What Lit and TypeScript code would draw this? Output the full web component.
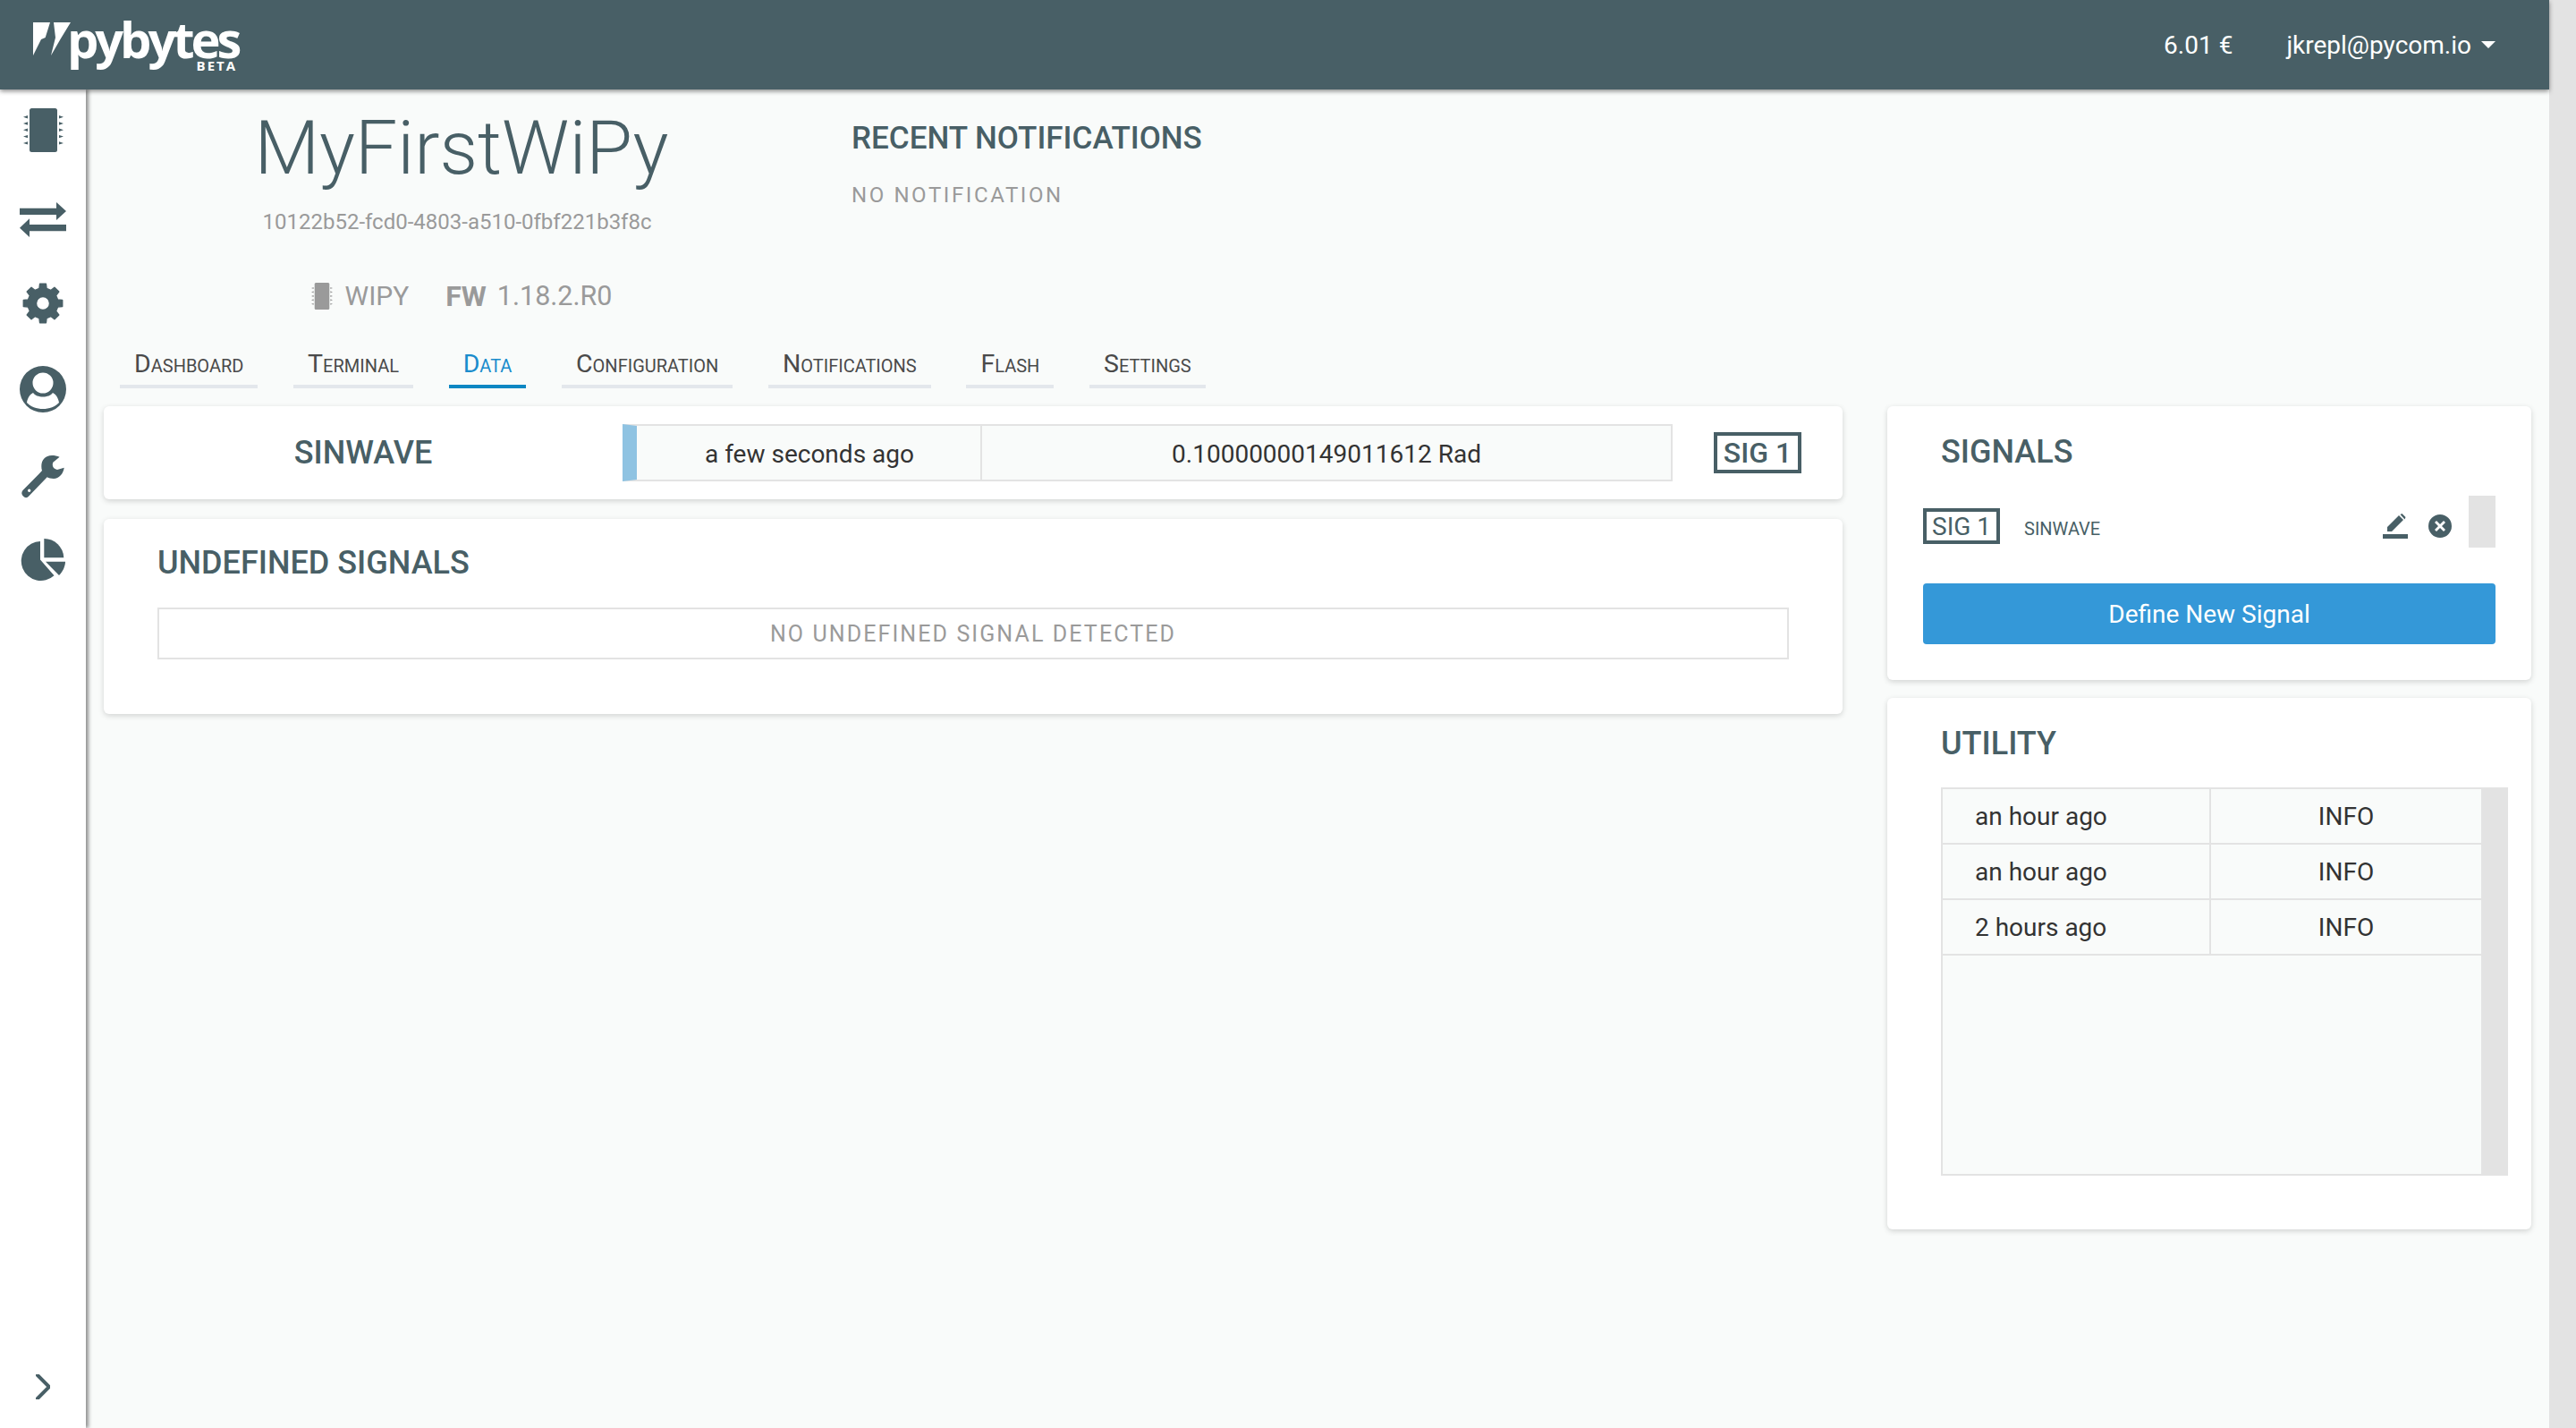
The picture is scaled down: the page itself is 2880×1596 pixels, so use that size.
import { LitElement, html, css, svg } from 'lit';
import { customElement } from 'lit/decorators.js';

const chipPins = [0, 1, 2, 3, 4];

const chipIcon = svg`
  <rect x="7" y="0" width="31" height="49" rx="2.500"></rect>
  ${chipPins.map(
    (i) => svg`
      <path d="M0 ${9.7 + i * 7.3}l5-1.700v3.400zM45 ${9.7 + i * 7.3}l-5-1.700v3.400z"></path>
    `
  )}
`;

// 8 teeth, built from angles so every tooth comes out the same
function gearPath(cx: number, cy: number, outer: number, root: number, hole: number) {
  const pt = (deg: number, r: number) => {
    const a = (deg * Math.PI) / 180;
    return `${(cx + r * Math.cos(a)).toFixed(2)} ${(cy + r * Math.sin(a)).toFixed(2)}`;
  };
  const parts: string[] = [];
  for (let i = 0; i < 8; i++) {
    const c = i * 45;
    parts.push(`${i === 0 ? 'M' : 'L'}${pt(c - 14, root)}`, `L${pt(c - 9, outer)}`, `L${pt(c + 9, outer)}`, `L${pt(c + 14, root)}`);
  }
  return `${parts.join(' ')}z M${cx - hole} ${cy}a${hole} ${hole} 0 1 0 ${hole * 2} 0a${hole} ${hole} 0 1 0 ${-hole * 2} 0z`;
}

@customElement('app-root')
export class AppRoot extends LitElement {
  static styles = css`
    :host {
      display: flex;
      width: 2880px;
      height: 1596px;
      overflow: hidden;
      font-family: Roboto, 'Liberation Sans', sans-serif;
      background: #e3e3e3;
    }
    .page {
      flex: 1;
      min-width: 0;
      display: flex;
      flex-direction: column;
      background: #f9fbfa;
    }
    .track {
      width: 30px;
      background: #e3e3e3;
    }
    header {
      position: relative;
      z-index: 2;
      height: 100px;
      flex: none;
      display: flex;
      align-items: center;
      justify-content: space-between;
      background: #485f66;
      color: #fff;
      box-shadow: 0 2px 5px rgba(0, 0, 0, 0.45);
    }
    .logo {
      align-self: flex-start;
      display: flex;
      align-items: flex-start;
      margin-left: 36px;
    }
    .logo svg {
      width: 45px;
      height: 39px;
      margin-top: 24px;
      fill: #fff;
    }
    .logo-text {
      display: flex;
      flex-direction: column;
      align-items: flex-end;
      margin-left: -6px;
      margin-top: 23px;
    }
    .logo-word {
      font-family: 'Open Sans', sans-serif;
      font-weight: 700;
      font-size: 56px;
      line-height: 40px;
      letter-spacing: -4.1px;
    }
    .logo-beta {
      font-family: 'Open Sans', sans-serif;
      font-weight: 700;
      font-size: 15px;
      line-height: 12px;
      letter-spacing: 2px;
      margin-top: 4px;
      margin-right: 1px;
    }
    .account {
      display: flex;
      align-items: center;
      font-size: 28px;
      margin-right: 60px;
    }
    .balance {
      margin-right: 60px;
    }
    .caret {
      width: 0;
      height: 0;
      margin-left: 11px;
      border: 8px solid transparent;
      border-top-color: #fff;
      border-bottom-width: 0;
    }
    .body {
      flex: 1;
      min-height: 0;
      display: flex;
    }
    nav {
      position: relative;
      z-index: 1;
      flex: none;
      width: 96px;
      display: flex;
      flex-direction: column;
      align-items: center;
      padding-bottom: 28px;
      box-sizing: border-box;
      background: #fff;
      box-shadow: 3px 0 4px rgba(0, 0, 0, 0.42);
    }
    nav .item {
      height: 96.4px;
      flex: none;
      display: flex;
      align-items: center;
      justify-content: center;
    }
    nav .item:first-child {
      margin-top: -3px;
    }
    nav svg {
      fill: #485f66;
      display: block;
    }
    nav .swap {
      margin-top: 7px;
    }
    nav .gear {
      margin-top: 3px;
      stroke: #485f66;
      stroke-width: 1.4;
      stroke-linejoin: round;
    }
    nav .person {
      margin-top: 1px;
    }
    nav .wrench {
      margin-top: 4px;
    }
    nav .pie {
      margin-bottom: 2px;
    }
    nav .bottom {
      margin-top: auto;
      height: 36px;
    }
    main {
      flex: 1;
      min-width: 0;
      padding: 0 20px;
      display: flex;
      flex-direction: column;
    }
    .head {
      display: flex;
      height: 276px;
      flex: none;
    }
    .device {
      width: 800px;
      text-align: center;
    }
    h1 {
      margin: 16px 0 0;
      font-weight: 300;
      font-size: 84px;
      line-height: 100px;
      color: #485f66;
    }
    .uuid {
      margin-top: 16px;
      font-size: 24px;
      line-height: 32px;
      color: #9a9a9a;
      padding-right: 10px;
    }
    .meta {
      margin-top: 47px;
      display: flex;
      align-items: center;
      justify-content: center;
      font-size: 30px;
      line-height: 40px;
      color: #9a9a9a;
    }
    .meta svg {
      width: 24px;
      height: 30px;
      margin-right: 14px;
      fill: #9a9a9a;
    }
    .meta b {
      font-size: 32px;
      font-weight: 700;
      margin-left: 41px;
      margin-right: 12px;
    }
    .meta .fw {
      font-size: 30.500px;
    }
    .recent {
      margin-left: 36px;
      padding-top: 32px;
    }
    .recent h2 {
      margin: 0;
      font-size: 35px;
      line-height: 46px;
      font-weight: 500;
      color: #485f66;
    }
    .recent p {
      margin: 24px 0 0;
      font-size: 24px;
      line-height: 32px;
      letter-spacing: 2.600px;
      color: #9a9a9a;
    }
    .tabs {
      display: flex;
      gap: 39.700px;
      margin-left: 18px;
      height: 58px;
      flex: none;
    }
    .tab {
      padding: 0 16px;
      height: 58px;
      box-sizing: border-box;
      border-bottom: 4px solid #e3e7ec;
      font-size: 20px;
      line-height: 62px;
      text-transform: uppercase;
      color: #4a4a4a;
    }
    .tab::first-letter {
      font-size: 28.500px;
    }
    .tab.active {
      color: #1a8ccc;
      border-bottom-color: #0e87c3;
    }
    .columns {
      display: flex;
      gap: 50px;
      margin-top: 20px;
      align-items: flex-start;
    }
    .left {
      flex: 1;
      min-width: 0;
      display: flex;
      flex-direction: column;
      gap: 22px;
    }
    .right {
      width: 720px;
      flex: none;
      display: flex;
      flex-direction: column;
      gap: 20px;
    }
    .card {
      background: #fff;
      border-radius: 6px;
      box-shadow: 0 2px 6px rgba(0, 0, 0, 0.16);
      box-sizing: border-box;
    }
    .card h3 {
      margin: 0;
      font-size: 36px;
      line-height: 46px;
      font-weight: 500;
      color: #485f66;
    }
    .signal {
      height: 104px;
      display: flex;
      align-items: center;
      padding: 0 46px 0 0;
    }
    .signal .name {
      width: 580px;
      text-align: center;
      font-size: 36px;
      font-weight: 500;
      color: #485f66;
    }
    .reading {
      flex: 1;
      height: 64px;
      display: flex;
      box-sizing: border-box;
      background: #f9fbfa;
      border: 2px solid #e3e3e3;
      border-left: 16px solid #8fc3e2;
      font-size: 28px;
      color: #333;
    }
    .reading div {
      display: flex;
      align-items: center;
      justify-content: center;
      padding-top: 2px;
    }
    .reading .time {
      width: 386px;
      flex: none;
      padding-left: 2px;
      box-sizing: border-box;
      border-right: 2px solid #e3e3e3;
    }
    .reading .value {
      flex: 1;
    }
    .badge {
      box-sizing: border-box;
      border: 4px solid #485f66;
      color: #485f66;
      font-weight: 500;
      display: flex;
      align-items: center;
      justify-content: center;
    }
    .signal .badge {
      width: 98px;
      height: 46px;
      margin-left: 46px;
      font-size: 32px;
    }
    .undefined {
      height: 218px;
      padding: 26px 60px 0;
    }
    .empty {
      margin-top: 27px;
      height: 58px;
      box-sizing: border-box;
      border: 2px solid #e3e3e3;
      display: flex;
      align-items: center;
      justify-content: center;
      font-size: 25px;
      letter-spacing: 2.100px;
      color: #9a9a9a;
    }
    .signals {
      height: 306px;
      padding: 28px 40px 0;
    }
    .signals h3 {
      margin-left: 20px;
    }
    .sig-row {
      margin-top: 26px;
      height: 58px;
      display: flex;
      align-items: center;
    }
    .sig-row .badge {
      width: 86px;
      height: 40px;
      font-size: 28px;
      font-weight: 400;
      margin-top: 10px;
    }
    .sig-name {
      margin-left: 27px;
      margin-top: 16px;
      font-size: 20px;
      color: #485f66;
    }
    .sig-actions {
      margin-left: auto;
      display: flex;
      align-items: center;
    }
    .sig-actions svg {
      fill: #485f66;
      display: block;
      margin-top: 10px;
    }
    .sig-actions .close {
      margin-left: 23px;
    }
    .handle {
      width: 30px;
      height: 58px;
      margin-left: 19px;
      background: #e3e3e3;
    }
    .define {
      margin-top: 40px;
      height: 68px;
      border-radius: 4px;
      background: #3498d8;
      color: #fff;
      font-size: 28px;
      display: flex;
      align-items: center;
      justify-content: center;
    }
    .utility {
      height: 594px;
      padding: 28px 26px 0 60px;
    }
    .log {
      margin-top: 26px;
      height: 434px;
      display: flex;
      box-sizing: border-box;
      border-top: 2px solid #e3e3e3;
      border-bottom: 2px solid #e3e3e3;
      border-left: 2px solid #e3e3e3;
      background: #e3e3e3;
    }
    .rows {
      flex: 1;
      background: #f9fbfa;
    }
    .row {
      height: 60px;
      display: flex;
      border-bottom: 2px solid #e3e3e3;
      font-size: 28px;
      color: #333;
    }
    .row div {
      display: flex;
      align-items: center;
    }
    .row .when {
      width: 300px;
      box-sizing: border-box;
      padding-left: 36px;
      border-right: 2px solid #e3e3e3;
    }
    .row .level {
      flex: 1;
      justify-content: center;
    }
    .log .bar {
      width: 30px;
      flex: none;
    }
  `;

  private notifications = ['an hour ago', 'an hour ago', '2 hours ago'];
  private tabs = ['Dashboard', 'Terminal', 'Data', 'Configuration', 'Notifications', 'Flash', 'Settings'];

  render() {
    return html`
      <div class="page">
        <header>
          <div class="logo">
            <svg viewBox="0 0 45 39">
              <path d="M1 1h19l-5.300 17-4.700 2-9 18zM24 1h19L32 19 21 38l5-20z"></path>
            </svg>
            <div class="logo-text">
              <span class="logo-word">pybytes</span>
              <span class="logo-beta">BETA</span>
            </div>
          </div>
          <div class="account">
            <span class="balance">6.01 €</span>
            <span>jkrepl@pycom.io</span>
            <span class="caret"></span>
          </div>
        </header>
        <div class="body">
          <nav>
            <div class="item">
              <svg width="45" height="49" viewBox="0 0 45 49">${chipIcon}</svg>
            </div>
            <div class="item">
              <svg class="swap" width="52" height="39" viewBox="0 0 52 39">
                <path d="M0 6.700h41V0l11 10-11 10v-6H0zM52 25H11v-6.700L0 28.700 11 39v-6.700h41z"></path>
              </svg>
            </div>
            <div class="item">
              <svg class="gear" width="46" height="46" viewBox="0 0 46 46">
                <path fill-rule="evenodd" d="${gearPath(23, 23, 22, 17, 7.5)}"></path>
              </svg>
            </div>
            <div class="item">
              <svg class="person" width="52" height="52" viewBox="0 0 52 52">
                <path
                  fill-rule="evenodd"
                  d="M26 0a26 26 0 1 1 0 52 26 26 0 0 1 0-52zM26 7.500a11.500 11.500 0 1 0 0 23 11.500 11.500 0 0 0 0-23zM8 41C9 35 12 31.500 15 30 19 36 33 36 37 30 40 31.500 43 35 44 41 40 45.500 33 48 26 48 19 48 12 45.500 8 41z"
                ></path>
              </svg>
            </div>
            <div class="item">
              <svg class="wrench" width="48" height="48" viewBox="0 0 48 48">
                <path
                  fill-rule="evenodd"
                  d="M42.600 1.700L35.300 7.700C34 11 35 15 40 16L47.700 13.700C47 20 42 26 36 26 33 26 30.500 25.500 28.700 24.300L8.700 45C6 48 4 47.500 2 45.500 0 43.500-.3 41 1.500 39L19.300 21 23 17C20.500 8 25 0 34 0 37 0 40 .5 42.600 1.700zM8.700 37.600a1.700 1.700 0 1 0 0 3.400 1.700 1.700 0 0 0 0-3.400z"
                ></path>
              </svg>
            </div>
            <div class="item">
              <svg class="pie" width="51" height="48" viewBox="0 0 51 48">
                <path d="M22 3v20.500l15.500 17.800A22 22 0 1 1 22 3z"></path>
                <path d="M26.300 0a22 22 0 0 1 22 21.300h-22z"></path>
                <path d="M28 25.700h22c0 5.300-3 11.300-7 15.300z"></path>
              </svg>
            </div>
            <div class="item bottom">
              <svg width="16" height="28" viewBox="0 0 16 28">
                <path d="M2 1l13 13L2 27" fill="none" stroke="#485f66" stroke-width="4" stroke-linecap="round"></path>
              </svg>
            </div>
          </nav>
          <main>
            <div class="head">
              <div class="device">
                <h1>MyFirstWiPy</h1>
                <div class="uuid">10122b52-fcd0-4803-a510-0fbf221b3f8c</div>
                <div class="meta">
                  <svg viewBox="0 0 45 49" preserveAspectRatio="none">${chipIcon}</svg>
                  <span>WIPY</span>
                  <b>FW</b>
                  <span class="fw">1.18.2.R0</span>
                </div>
              </div>
              <div class="recent">
                <h2>RECENT NOTIFICATIONS</h2>
                <p>NO NOTIFICATION</p>
              </div>
            </div>
            <div class="tabs">
              ${this.tabs.map(
                (t) => html`<div class="tab ${t === 'Data' ? 'active' : ''}">${t}</div>`
              )}
            </div>
            <div class="columns">
              <div class="left">
                <div class="card signal">
                  <div class="name">SINWAVE</div>
                  <div class="reading">
                    <div class="time">a few seconds ago</div>
                    <div class="value">0.10000000149011612 Rad</div>
                  </div>
                  <div class="badge">SIG 1</div>
                </div>
                <div class="card undefined">
                  <h3>UNDEFINED SIGNALS</h3>
                  <div class="empty">NO UNDEFINED SIGNAL DETECTED</div>
                </div>
              </div>
              <div class="right">
                <div class="card signals">
                  <h3>SIGNALS</h3>
                  <div class="sig-row">
                    <div class="badge">SIG 1</div>
                    <div class="sig-name">SINWAVE</div>
                    <div class="sig-actions">
                      <svg width="28" height="28" viewBox="0 0 28 28">
                        <path d="M0 23h28v5H0zM5 20v-5L18 2l5 5-13 13zM19.500 1l2-1 4 4-1 2.500z"></path>
                      </svg>
                      <svg class="close" width="26" height="26" viewBox="0 0 26 26">
                        <path
                          fill-rule="evenodd"
                          d="M13 0a13 13 0 1 1 0 26 13 13 0 0 1 0-26zM9 7L7 9l4 4-4 4 2 2 4-4 4 4 2-2-4-4 4-4-2-2-4 4z"
                        ></path>
                      </svg>
                      <div class="handle"></div>
                    </div>
                  </div>
                  <div class="define">Define New Signal</div>
                </div>
                <div class="card utility">
                  <h3>UTILITY</h3>
                  <div class="log">
                    <div class="rows">
                      ${this.notifications.map(
                        (n) => html`
                          <div class="row">
                            <div class="when">${n}</div>
                            <div class="level">INFO</div>
                          </div>
                        `
                      )}
                    </div>
                    <div class="bar"></div>
                  </div>
                </div>
              </div>
            </div>
          </main>
        </div>
      </div>
      <div class="track"></div>
    `;
  }
}
